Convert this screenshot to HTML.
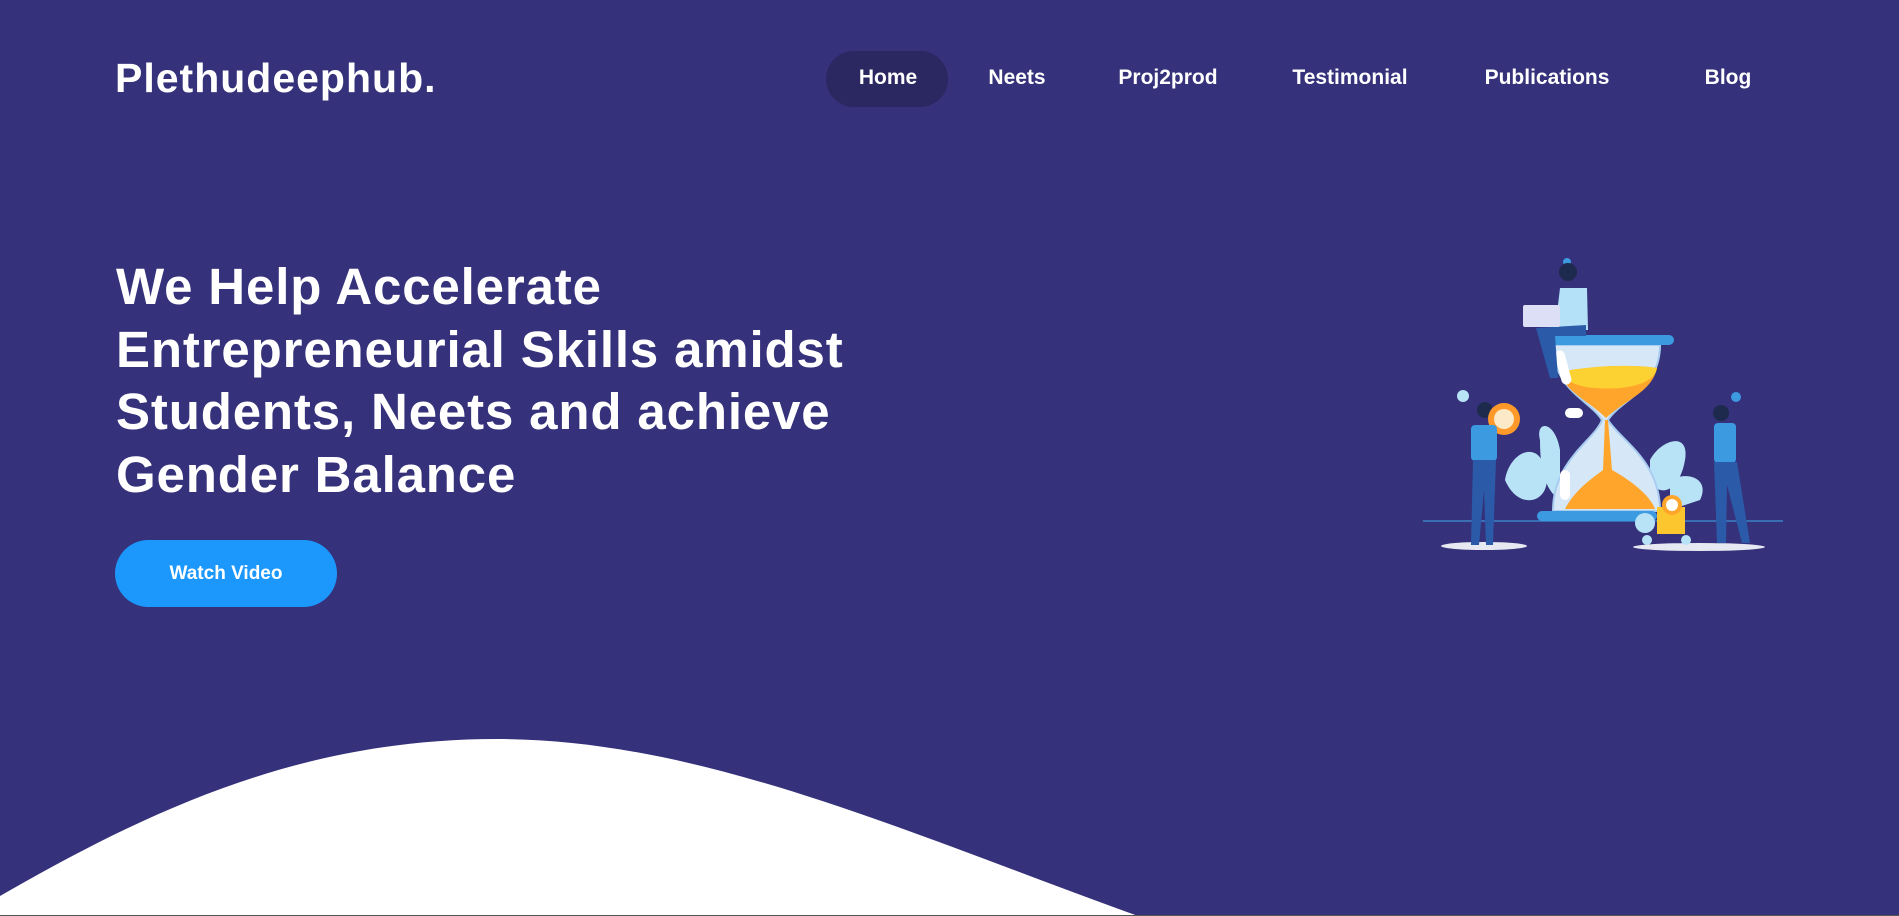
<!DOCTYPE html>
<html><head><meta charset="utf-8"><style>
*{margin:0;padding:0;box-sizing:border-box}
body{width:1899px;height:916px;overflow:hidden;background:#35317a;font-family:"Liberation Sans",sans-serif;color:#fff;position:relative}
.logo{position:absolute;left:115px;top:55px;font-size:41px;font-weight:bold;letter-spacing:1px}
.nav a{position:absolute;top:66px;font-size:21px;font-weight:bold;transform:translateX(-50%);white-space:nowrap}
.pill{position:absolute;left:826px;top:51px;width:122px;height:56px;border-radius:28px;background:#2a2761}
h1{position:absolute;left:116px;top:256px;font-size:51px;line-height:62.5px;font-weight:bold;letter-spacing:0.85px}
.btn{position:absolute;left:115px;top:540px;width:222px;height:67px;border-radius:34px;background:#1c98fd;font-size:19px;font-weight:bold;text-align:center;line-height:67px}
svg{position:absolute;left:0;top:0}
</style></head><body>
<svg width="1899" height="916">
<path d="M0 896 C150 810 300 739 497 739 C700 739 900 830 1138 916 L0 916Z" fill="#fff"/>
<line x1="1423" y1="521" x2="1783" y2="521" stroke="#3b82c8" stroke-width="1.5"/>
<ellipse cx="1484" cy="546" rx="43" ry="4" fill="#e6e9f2"/>
<ellipse cx="1699" cy="547" rx="66" ry="4" fill="#e6e9f2"/>
<path d="M1505 480 C1510 450 1540 440 1545 470 C1555 500 1520 515 1505 480Z" fill="#b8e3f7"/>
<path d="M1540 440 C1535 420 1555 420 1560 450 L1560 500 C1545 490 1540 470 1540 440Z" fill="#b8e3f7"/>
<path d="M1650 460 C1660 440 1690 430 1685 460 C1680 490 1660 500 1650 480Z" fill="#b8e3f7"/>
<path d="M1670 480 C1690 470 1710 480 1700 500 L1670 510Z" fill="#b8e3f7"/>
<path d="M1553 345 L1660 345 C1660 390 1620 400 1608 420 C1620 440 1660 460 1660 511 L1553 511 C1553 460 1595 440 1602 420 C1590 400 1553 390 1553 345Z" fill="#d6e8f8" stroke="#a9cdf0" stroke-width="2"/>
<path d="M1560 372 C1590 366 1630 364 1657 368 C1652 392 1625 400 1606 418 C1588 400 1565 392 1560 372Z" fill="#ffa52b"/>
<path d="M1560 372 C1590 366 1630 364 1657 368 C1655 380 1640 386 1620 388 C1590 390 1568 386 1560 372Z" fill="#fcd232"/>
<path d="M1605 420 L1608 420 L1612 470 C1630 480 1650 495 1655 509 L1565 509 C1575 490 1590 480 1603 470Z" fill="#ffa52b"/>
<rect x="1558" y="350" width="10" height="35" rx="5" fill="#fff" transform="rotate(-15 1563 367)"/>
<rect x="1565" y="408" width="18" height="10" rx="5" fill="#fff"/>
<rect x="1560" y="470" width="10" height="30" rx="5" fill="#fff"/>
<rect x="1543" y="335" width="131" height="10" rx="5" fill="#3b9ae0"/>
<rect x="1537" y="511" width="120" height="10" rx="5" fill="#3b9ae0"/>
<circle cx="1567" cy="262" r="4" fill="#3b9ae0"/>
<circle cx="1568" cy="272" r="9" fill="#1e2a4d"/>
<path d="M1560 288 L1587 288 L1588 330 L1555 330Z" fill="#b4e0f8"/>
<path d="M1536 328 L1586 325 L1586 336 L1555 336 L1558 378 L1550 378 Z" fill="#2a5aa8"/>
<rect x="1523" y="305" width="37" height="22" rx="2" fill="#dcdff5"/>
<circle cx="1463" cy="396" r="6" fill="#b8e3f7"/>
<circle cx="1485" cy="410" r="8" fill="#1e2a4d"/>
<circle cx="1504" cy="419" r="16" fill="#ff9a2a"/>
<circle cx="1504" cy="419" r="10" fill="#fbe9c8"/>
<rect x="1471" y="425" width="26" height="36" rx="4" fill="#3b9ae0"/>
<path d="M1473 460 L1496 460 L1493 545 L1486 545 L1484 490 L1479 545 L1471 545Z" fill="#2a5aa8"/>
<circle cx="1736" cy="397" r="5" fill="#3b9ae0"/>
<circle cx="1721" cy="413" r="8" fill="#1e2a4d"/>
<rect x="1714" y="423" width="22" height="40" rx="4" fill="#3b9ae0"/>
<path d="M1714 462 L1737 462 L1750 543 L1742 543 L1727 485 L1726 543 L1717 543Z" fill="#2a5aa8"/>
<rect x="1657" y="507" width="28" height="27" fill="#fcc72e"/>
<circle cx="1672" cy="505" r="10" fill="#ffa52b"/>
<circle cx="1672" cy="505" r="6" fill="#fff"/>
<circle cx="1645" cy="523" r="10" fill="#b8e3f7"/>
<circle cx="1647" cy="540" r="5" fill="#b8e3f7"/><circle cx="1686" cy="540" r="5" fill="#b8e3f7"/>
<line x1="0" y1="915.5" x2="1899" y2="915.5" stroke="#555" stroke-width="1"/>
</svg>
<div class="logo">Plethudeephub.</div>
<div class="pill"></div>
<div class="nav">
<a style="left:888px">Home</a><a style="left:1017px">Neets</a><a style="left:1168px">Proj2prod</a><a style="left:1350px">Testimonial</a><a style="left:1547px">Publications</a><a style="left:1728px">Blog</a>
</div>
<h1>We Help Accelerate<br>Entrepreneurial Skills amidst<br>Students, Neets and achieve<br>Gender Balance</h1>
<div class="btn">Watch Video</div>
</body></html>
